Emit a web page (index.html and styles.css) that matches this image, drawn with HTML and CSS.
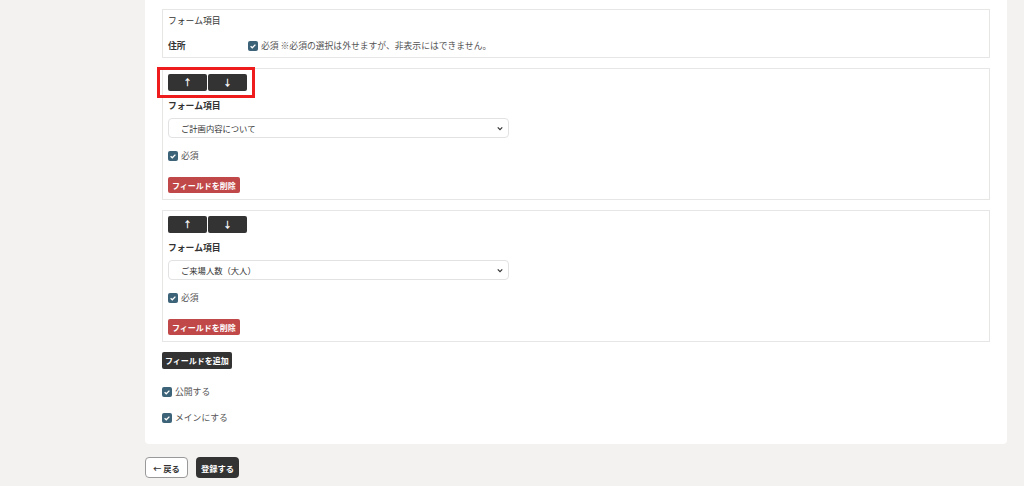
FILE: index.html
```html
<!DOCTYPE html>
<html lang="ja">
<head>
    <meta charset="UTF-8">
    <meta name="viewport" content="width=device-width, initial-scale=1.0">
    <title>フォーム設定</title>
    <link rel="stylesheet" href="styles.css">
</head>
<body>
    <div class="page">
        <div class="panel">
            <div class="card card-fixed">
                <div class="card-title">フォーム項目</div>
                <div class="fixed-row">
                    <div class="fixed-label">住所</div>
                    <label class="check">
                        <span class="box"><svg viewBox="0 0 10 10"><path d="M2.6 5.2 L4.3 6.8 L7.4 3.6" fill="none" stroke="#fff" stroke-width="1.3"/></svg></span>
                        必須 ※必須の選択は外せますが、非表示にはできません。
                    </label>
                </div>
            </div>

            <div class="card">
                <div class="highlight"></div>
                <div class="moves">
                    <button class="btn-move">&#8593;</button>
                    <button class="btn-move">&#8595;</button>
                </div>
                <div class="field-label">フォーム項目</div>
                <div class="select">
                    <span>ご計画内容について</span>
                    <svg class="chevron" viewBox="0 0 8 6"><path d="M1 1.5 L4 4.5 L7 1.5" fill="none" stroke="#333" stroke-width="1.6"/></svg>
                </div>
                <label class="check check-row">
                    <span class="box"><svg viewBox="0 0 10 10"><path d="M2.6 5.2 L4.3 6.8 L7.4 3.6" fill="none" stroke="#fff" stroke-width="1.3"/></svg></span>
                    必須
                </label>
                <button class="btn-delete">フィールドを削除</button>
            </div>

            <div class="card">
                <div class="moves">
                    <button class="btn-move">&#8593;</button>
                    <button class="btn-move">&#8595;</button>
                </div>
                <div class="field-label">フォーム項目</div>
                <div class="select">
                    <span>ご来場人数（大人）</span>
                    <svg class="chevron" viewBox="0 0 8 6"><path d="M1 1.5 L4 4.5 L7 1.5" fill="none" stroke="#333" stroke-width="1.6"/></svg>
                </div>
                <label class="check check-row">
                    <span class="box"><svg viewBox="0 0 10 10"><path d="M2.6 5.2 L4.3 6.8 L7.4 3.6" fill="none" stroke="#fff" stroke-width="1.3"/></svg></span>
                    必須
                </label>
                <button class="btn-delete">フィールドを削除</button>
            </div>

            <button class="btn-add">フィールドを追加</button>

            <label class="check option option-first">
                <span class="box"><svg viewBox="0 0 10 10"><path d="M2.6 5.2 L4.3 6.8 L7.4 3.6" fill="none" stroke="#fff" stroke-width="1.3"/></svg></span>
                公開する
            </label>
            <label class="check option">
                <span class="box"><svg viewBox="0 0 10 10"><path d="M2.6 5.2 L4.3 6.8 L7.4 3.6" fill="none" stroke="#fff" stroke-width="1.3"/></svg></span>
                メインにする
            </label>
        </div>

        <div class="footer">
            <button class="btn-back">&#8592; 戻る</button>
            <button class="btn-submit">登録する</button>
        </div>
    </div>
</body>
</html>
```

FILE: styles.css
```css
body {
    margin: 0;
    background-color: #f3f2f0;
    font-family: "Noto Sans CJK JP", "Noto Sans", sans-serif;
    font-size: 8.8px;
    color: #333;
}
button {
    font-family: inherit;
    border: none;
    padding: 0;
    cursor: pointer;
    box-sizing: border-box;
}
.page {
    padding-left: 145px;
    width: 862px;
}
.panel {
    background-color: #fff;
    padding: 9px 17px 20px 17px;
    border-radius: 0 0 4px 4px;
}
.card {
    position: relative;
    border: 1px solid #e6e6e4;
    padding: 5px 5px 6px 5px;
    margin-bottom: 10px;
}
.card-fixed {
    padding-bottom: 5px;
    margin-bottom: 10px;
}
.card-title {
    line-height: 12px;
}
.fixed-row {
    display: flex;
    align-items: center;
    margin-top: 13px;
    height: 12px;
}
.fixed-label {
    width: 80px;
    font-weight: bold;
    line-height: 12px;
}
.check {
    display: flex;
    align-items: center;
    gap: 3px;
    line-height: 12px;
    color: #555;
}
.box {
    display: inline-block;
    width: 10px;
    height: 10px;
    background-color: #3c6378;
    border-radius: 2px;
}
.box svg {
    display: block;
    width: 10px;
    height: 10px;
}
.highlight {
    position: absolute;
    left: -6px;
    top: -2px;
    width: 92px;
    height: 25px;
    border: 3px solid #ee1c1c;
}
.moves {
    display: flex;
    gap: 1px;
}
.btn-move {
    width: 39px;
    height: 17px;
    background-color: #333;
    color: #fff;
    border-radius: 2px;
    font-size: 9px;
    font-weight: bold;
    line-height: 17px;
}
.field-label {
    margin-top: 9px;
    font-weight: bold;
    line-height: 12px;
}
.select {
    display: flex;
    align-items: center;
    justify-content: space-between;
    width: 341px;
    height: 20px;
    box-sizing: border-box;
    margin-top: 6px;
    padding: 0 5px 0 12px;
    border: 1px solid #e2e2e2;
    border-radius: 4px;
    font-size: 8.3px;
    color: #333;
}
.chevron {
    width: 6px;
    height: 5px;
}
.check-row {
    margin-top: 12px;
}
.btn-delete {
    display: block;
    margin-top: 15px;
    height: 16px;
    padding: 0 4px;
    background-color: #c04848;
    color: #fff;
    font-size: 8px;
    font-weight: bold;
    border-radius: 2px;
}
.btn-add {
    display: block;
    margin-top: 1px;
    height: 17px;
    padding: 0 3px;
    background-color: #333;
    color: #fff;
    font-size: 8px;
    font-weight: bold;
    border-radius: 2px;
}
.option {
    margin-top: 14px;
}
.option-first {
    margin-top: 17px;
}
.footer {
    display: flex;
    gap: 8px;
    margin-top: 13px;
}
.btn-back {
    width: 43px;
    height: 21px;
    background-color: #fff;
    border: 1px solid #999;
    border-radius: 4px;
    color: #333;
    font-size: 8.3px;
    font-weight: bold;
}
.btn-submit {
    width: 43px;
    height: 21px;
    background-color: #333;
    color: #fff;
    border-radius: 4px;
    font-size: 8.3px;
    font-weight: bold;
}
```
